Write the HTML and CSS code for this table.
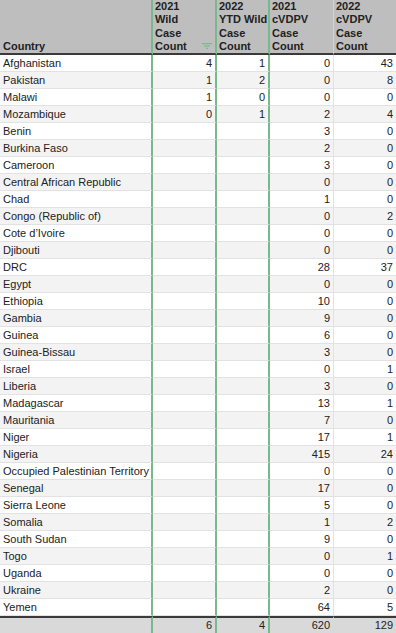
FILE: index.html
```html
<!DOCTYPE html>
<html>
<head>
<meta charset="utf-8">
<link rel="stylesheet" href="styles.css">
</head>
<body>
<table class="sheet">
  <colgroup>
    <col class="c-country"><col class="c-wild21"><col class="c-wild22"><col class="c-vd21"><col class="c-vd22">
  </colgroup>
  <thead>
    <tr>
      <th class="h-country"><div class="hcell">Country</div></th>
      <th class="h-num green"><div class="hcell"><span>2021<br>Wild<br>Case<br>Count</span><svg class="filter" width="10" height="6" viewBox="0 0 10 6"><rect x="0" y="0" width="10" height="1.2"/><rect x="2" y="2.4" width="6" height="1.2"/><rect x="4" y="4.8" width="2" height="1.2"/></svg></div></th>
      <th class="h-num green"><div class="hcell">2022<br>YTD Wild<br>Case<br>Count</div></th>
      <th class="h-num"><div class="hcell">2021<br>cVDPV<br>Case<br>Count</div></th>
      <th class="h-num last"><div class="hcell">2022<br>cVDPV<br>Case<br>Count</div></th>
    </tr>
  </thead>
  <tbody>
    <tr><td>Afghanistan</td><td class="n green">4</td><td class="n green">1</td><td class="n">0</td><td class="n last">43</td></tr>
    <tr><td>Pakistan</td><td class="n green">1</td><td class="n green">2</td><td class="n">0</td><td class="n last">8</td></tr>
    <tr><td>Malawi</td><td class="n green">1</td><td class="n green">0</td><td class="n">0</td><td class="n last">0</td></tr>
    <tr><td>Mozambique</td><td class="n green">0</td><td class="n green">1</td><td class="n">2</td><td class="n last">4</td></tr>
    <tr><td>Benin</td><td class="n green"></td><td class="n green"></td><td class="n">3</td><td class="n last">0</td></tr>
    <tr><td>Burkina Faso</td><td class="n green"></td><td class="n green"></td><td class="n">2</td><td class="n last">0</td></tr>
    <tr><td>Cameroon</td><td class="n green"></td><td class="n green"></td><td class="n">3</td><td class="n last">0</td></tr>
    <tr><td>Central African Republic</td><td class="n green"></td><td class="n green"></td><td class="n">0</td><td class="n last">0</td></tr>
    <tr><td>Chad</td><td class="n green"></td><td class="n green"></td><td class="n">1</td><td class="n last">0</td></tr>
    <tr><td>Congo (Republic of)</td><td class="n green"></td><td class="n green"></td><td class="n">0</td><td class="n last">2</td></tr>
    <tr><td>Cote d’Ivoire</td><td class="n green"></td><td class="n green"></td><td class="n">0</td><td class="n last">0</td></tr>
    <tr><td>Djibouti</td><td class="n green"></td><td class="n green"></td><td class="n">0</td><td class="n last">0</td></tr>
    <tr><td>DRC</td><td class="n green"></td><td class="n green"></td><td class="n">28</td><td class="n last">37</td></tr>
    <tr><td>Egypt</td><td class="n green"></td><td class="n green"></td><td class="n">0</td><td class="n last">0</td></tr>
    <tr><td>Ethiopia</td><td class="n green"></td><td class="n green"></td><td class="n">10</td><td class="n last">0</td></tr>
    <tr><td>Gambia</td><td class="n green"></td><td class="n green"></td><td class="n">9</td><td class="n last">0</td></tr>
    <tr><td>Guinea</td><td class="n green"></td><td class="n green"></td><td class="n">6</td><td class="n last">0</td></tr>
    <tr><td>Guinea-Bissau</td><td class="n green"></td><td class="n green"></td><td class="n">3</td><td class="n last">0</td></tr>
    <tr><td>Israel</td><td class="n green"></td><td class="n green"></td><td class="n">0</td><td class="n last">1</td></tr>
    <tr><td>Liberia</td><td class="n green"></td><td class="n green"></td><td class="n">3</td><td class="n last">0</td></tr>
    <tr><td>Madagascar</td><td class="n green"></td><td class="n green"></td><td class="n">13</td><td class="n last">1</td></tr>
    <tr><td>Mauritania</td><td class="n green"></td><td class="n green"></td><td class="n">7</td><td class="n last">0</td></tr>
    <tr><td>Niger</td><td class="n green"></td><td class="n green"></td><td class="n">17</td><td class="n last">1</td></tr>
    <tr><td>Nigeria</td><td class="n green"></td><td class="n green"></td><td class="n">415</td><td class="n last">24</td></tr>
    <tr><td>Occupied Palestinian Territory</td><td class="n green"></td><td class="n green"></td><td class="n">0</td><td class="n last">0</td></tr>
    <tr><td>Senegal</td><td class="n green"></td><td class="n green"></td><td class="n">17</td><td class="n last">0</td></tr>
    <tr><td>Sierra Leone</td><td class="n green"></td><td class="n green"></td><td class="n">5</td><td class="n last">0</td></tr>
    <tr><td>Somalia</td><td class="n green"></td><td class="n green"></td><td class="n">1</td><td class="n last">2</td></tr>
    <tr><td>South Sudan</td><td class="n green"></td><td class="n green"></td><td class="n">9</td><td class="n last">0</td></tr>
    <tr><td>Togo</td><td class="n green"></td><td class="n green"></td><td class="n">0</td><td class="n last">1</td></tr>
    <tr><td>Uganda</td><td class="n green"></td><td class="n green"></td><td class="n">0</td><td class="n last">0</td></tr>
    <tr><td>Ukraine</td><td class="n green"></td><td class="n green"></td><td class="n">2</td><td class="n last">0</td></tr>
    <tr><td>Yemen</td><td class="n green"></td><td class="n green"></td><td class="n">64</td><td class="n last">5</td></tr>
  </tbody>
  <tfoot>
    <tr><td></td><td class="n green">6</td><td class="n green">4</td><td class="n">620</td><td class="n last">129</td></tr>
  </tfoot>
</table>
</body>
</html>
```

FILE: styles.css
```css
html, body {
  margin: 0;
  padding: 0;
  background: #ffffff;
}
body {
  overflow: hidden;
  height: 633px;
}
.sheet {
  border-collapse: separate;
  border-spacing: 0;
  table-layout: fixed;
  width: 396px;
  font-family: "Liberation Sans", Arial, sans-serif;
  font-size: 11px;
  color: #222222;
}
.c-country { width: 153px; }
.c-wild21 { width: 64px; }
.c-wild22 { width: 53px; }
.c-vd21 { width: 64px; }
.c-vd22 { width: 62px; }

.sheet th, .sheet td {
  box-sizing: border-box;
  padding: 0;
  overflow: hidden;
  white-space: nowrap;
}
.sheet thead th {
  background: #bebebe;
  font-weight: bold;
  text-align: left;
  vertical-align: bottom;
  border-bottom: 2px solid #3a3a3a;
  border-right: 1px solid #d4d4d4;
}
.sheet thead th.h-country {
  border-right: 2px solid #78b88a;
}
.hcell {
  height: 53px;
  line-height: 13.25px;
  padding: 0 3px 0 2px;
  display: flex;
  align-items: flex-end;
  justify-content: space-between;
}
.h-country .hcell {
  padding-left: 3px;
}
.filter {
  fill: #7ab989;
  margin-bottom: 4px;
  flex: none;
}
.sheet tbody td {
  height: 17px;
  line-height: 16px;
  padding: 0 3px;
  border-bottom: 1px solid #e2e2e2;
  border-right: 1px solid #e2e2e2;
}
.sheet tbody tr:nth-child(even) td {
  background: #f3f3f3;
}
.sheet tbody td:first-child {
  border-right: 2px solid #78b88a;
}
.sheet td.n {
  text-align: right;
  padding: 0 3px 0 2px;
}
.sheet th.green, .sheet td.green {
  border-right: 2px solid #78b88a;
}
.sheet th.last, .sheet td.last {
  border-right: 0;
}
.sheet tfoot td {
  height: 17px;
  line-height: 15px;
  background: #d9d9d9;
  border-top: 2px solid #3a3a3a;
  border-right: 1px solid #d9d9d9;
}
.sheet tfoot td:first-child {
  border-right: 2px solid #78b88a;
}
.sheet tfoot td.green {
  border-right: 2px solid #78b88a;
}
.sheet tfoot td.last {
  border-right: 0;
}
```
